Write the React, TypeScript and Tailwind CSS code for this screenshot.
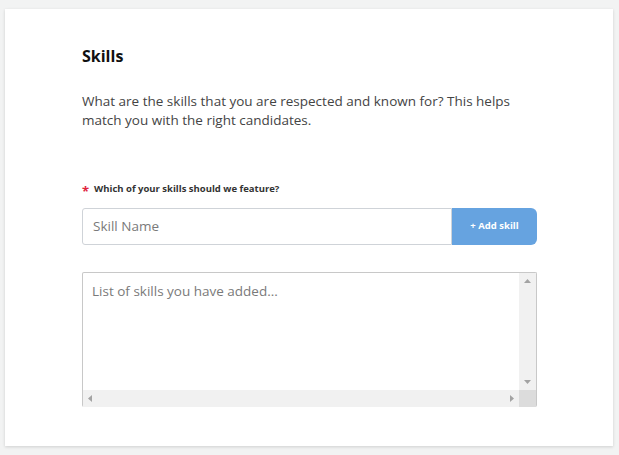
import React from "react";

const ArrowUp = () => (
  <svg width="7" height="4" viewBox="0 0 7 4" className="fill-[#a3a3a3]">
    <path d="M0 4 L3.5 0 L7 4 Z" />
  </svg>
);
const ArrowDown = () => (
  <svg width="7" height="4" viewBox="0 0 7 4" className="fill-[#a3a3a3]">
    <path d="M0 0 L3.5 4 L7 0 Z" />
  </svg>
);
const ArrowLeft = () => (
  <svg width="4" height="7" viewBox="0 0 4 7" className="fill-[#a3a3a3]">
    <path d="M4 0 L0 3.5 L4 7 Z" />
  </svg>
);
const ArrowRight = () => (
  <svg width="4" height="7" viewBox="0 0 4 7" className="fill-[#a3a3a3]">
    <path d="M0 0 L4 3.5 L0 7 Z" />
  </svg>
);

const App = () => {
  return (
    <div className="min-h-[455px] w-[619px] bg-[#f2f3f3] pt-[9px] pl-[5px] pr-[6px] font-['Open_Sans',sans-serif]">
      <div className="h-[437px] bg-white shadow-[0_1px_3px_rgba(0,0,0,0.15)] pl-[77px] pr-[76px] pt-[37px]">
        <h2 className="text-[16px] font-bold text-[#111] leading-[20px]">Skills</h2>
        <p className="mt-[26px] text-[13.5px] leading-[19px] text-[#444] w-[440px]">
          What are the skills that you are respected and known for? This helps
          match you with the right candidates.
        </p>

        <div className="mt-[52px] flex items-center gap-[5px] text-[9.5px] font-bold text-[#333] leading-[14px]">
          <span className="text-[#e0243c] text-[13px] leading-[10px] pt-[3px]">*</span>
          <span>Which of your skills should we feature?</span>
        </div>

        <div className="mt-[12px] flex h-[37px]">
          <input
            type="text"
            placeholder="Skill Name"
            className="flex-1 min-w-0 border border-[#cfd3d8] rounded-l-[3px] px-[10px] text-[13.5px] text-[#333] placeholder:text-[#7a7a7a] outline-none"
          />
          <button className="w-[85px] bg-[#66a3e0] text-white text-[9.5px] font-bold rounded-r-[6px]">
            + Add skill
          </button>
        </div>

        <div className="mt-[27px] h-[135px] border border-[#c8c8c8] border-b-0 rounded-[2px] flex flex-col">
          <div className="flex flex-1 min-h-0">
            <div className="flex-1 px-[9px] pt-[8px] text-[13.5px] text-[#7a7a7a] leading-[20px]">
              List of skills you have added...
            </div>
            <div className="w-[17px] bg-[#f1f1f1] flex flex-col items-center justify-between py-[6px]">
              <ArrowUp />
              <ArrowDown />
            </div>
          </div>
          <div className="flex h-[17px]">
            <div className="flex-1 bg-[#f1f1f1] flex items-center justify-between px-[5px]">
              <ArrowLeft />
              <ArrowRight />
            </div>
            <div className="w-[17px] bg-[#dcdcdc]" />
          </div>
        </div>
      </div>
    </div>
  );
};

export default App;
